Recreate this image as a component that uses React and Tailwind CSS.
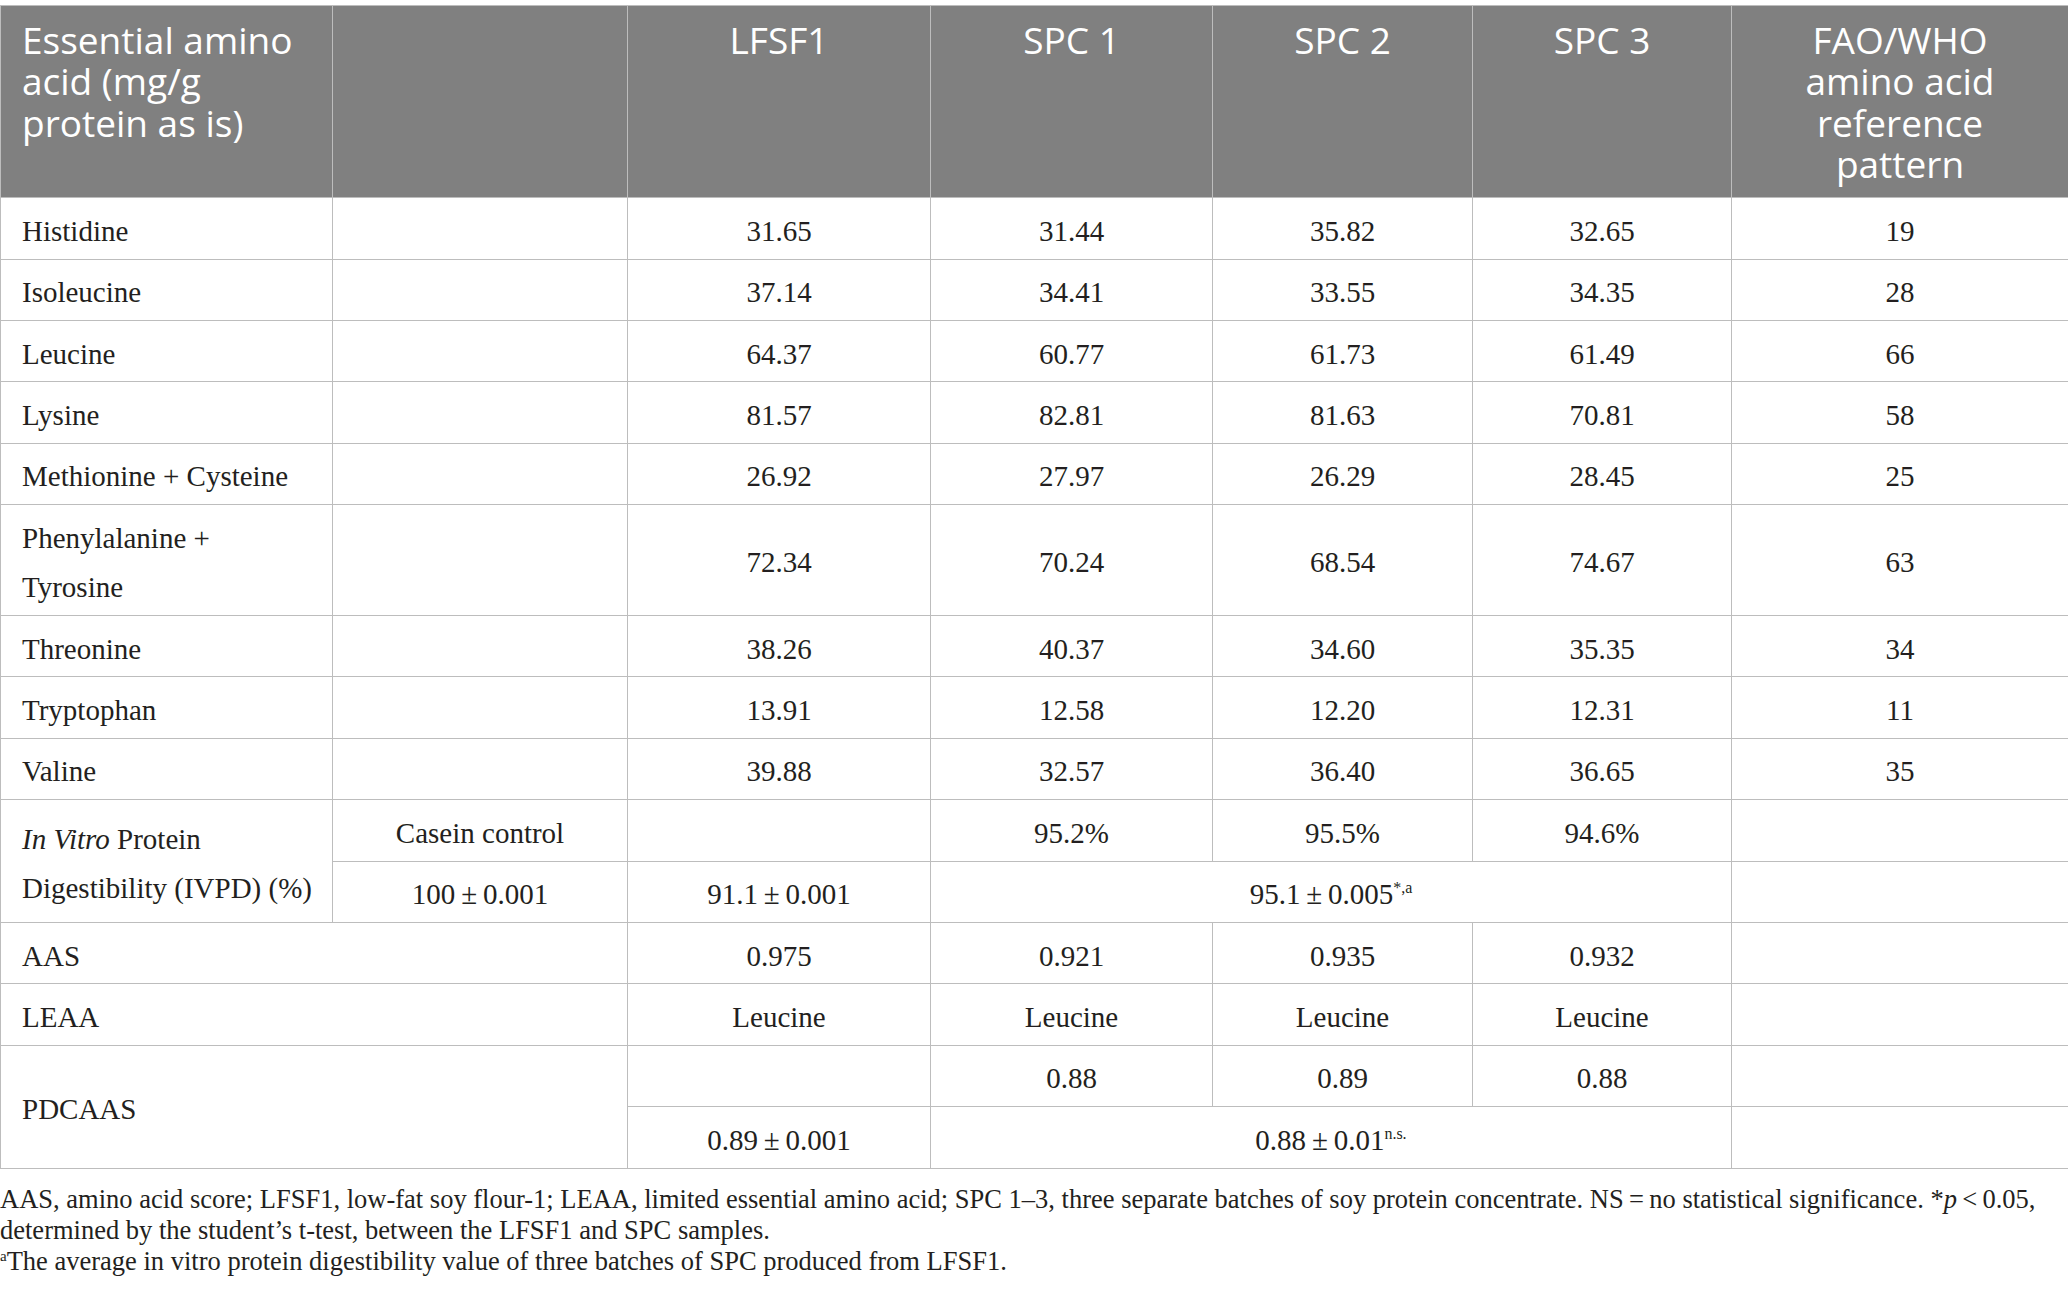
import React from "react";

const rows = [
  ["Histidine", "31.65", "31.44", "35.82", "32.65", "19"],
  ["Isoleucine", "37.14", "34.41", "33.55", "34.35", "28"],
  ["Leucine", "64.37", "60.77", "61.73", "61.49", "66"],
  ["Lysine", "81.57", "82.81", "81.63", "70.81", "58"],
  ["Methionine + Cysteine", "26.92", "27.97", "26.29", "28.45", "25"],
  [
    <>
      Phenylalanine +<br />
      Tyrosine
    </>,
    "72.34",
    "70.24",
    "68.54",
    "74.67",
    "63",
  ],
  ["Threonine", "38.26", "40.37", "34.60", "35.35", "34"],
  ["Tryptophan", "13.91", "12.58", "12.20", "12.31", "11"],
  ["Valine", "39.88", "32.57", "36.40", "36.65", "35"],
];

const C =
  "border border-[#bdbdbd] pt-[8.5px] pb-[2.5px] px-[12px] leading-[49.4px] align-middle text-center";
const L =
  "border border-[#bdbdbd] pt-[8.5px] pb-[2.5px] pl-[21px] pr-[8px] leading-[49.4px] align-middle text-left";
const H =
  "border border-[#bdbdbd] bg-[#808080] text-white align-top pt-[13px] pb-[13px] px-[10px] text-center font-['Open_Sans',sans-serif] text-[37px] leading-[41.3px] font-normal";

const pm = "\u2009±\u2009";

export default function App() {
  return (
    <div className="w-[2068px] min-h-[1296px] bg-white pt-[5px] text-[#231f20] font-['Liberation_Serif','Times_New_Roman',serif] text-[29px]">
      <table className="w-[2068px] table-fixed border-collapse">
        <colgroup>
          <col className="w-[332px]" />
          <col className="w-[295px]" />
          <col className="w-[303px]" />
          <col className="w-[282px]" />
          <col className="w-[260px]" />
          <col className="w-[259px]" />
          <col className="w-[337px]" />
        </colgroup>
        <thead>
          <tr>
            <th className={H + " !text-left !pl-[21px]"}>
              Essential amino
              <br />
              acid (mg/g
              <br />
              protein as is)
            </th>
            <th className={H}></th>
            <th className={H}>LFSF1</th>
            <th className={H}>SPC 1</th>
            <th className={H}>SPC 2</th>
            <th className={H}>SPC 3</th>
            <th className={H}>
              FAO/WHO
              <br />
              amino acid
              <br />
              reference
              <br />
              pattern
            </th>
          </tr>
        </thead>
        <tbody>
          {rows.map((r, i) => (
            <tr key={i}>
              <td className={L}>{r[0]}</td>
              <td className={C}></td>
              <td className={C}>{r[1]}</td>
              <td className={C}>{r[2]}</td>
              <td className={C}>{r[3]}</td>
              <td className={C}>{r[4]}</td>
              <td className={C}>{r[5]}</td>
            </tr>
          ))}
          <tr>
            <td className={L} rowSpan={2}>
              <i>In Vitro</i> Protein
              <br />
              Digestibility (IVPD) (%)
            </td>
            <td className={C}>Casein control</td>
            <td className={C}></td>
            <td className={C}>95.2%</td>
            <td className={C}>95.5%</td>
            <td className={C}>94.6%</td>
            <td className={C}></td>
          </tr>
          <tr>
            <td className={C}>100{pm}0.001</td>
            <td className={C}>91.1{pm}0.001</td>
            <td className={C} colSpan={3}>
              95.1{pm}0.005
              <sup className="text-[16px] leading-none -top-[11px]">*,a</sup>
            </td>
            <td className={C}></td>
          </tr>
          <tr>
            <td className={L} colSpan={2}>AAS</td>
            <td className={C}>0.975</td>
            <td className={C}>0.921</td>
            <td className={C}>0.935</td>
            <td className={C}>0.932</td>
            <td className={C}></td>
          </tr>
          <tr>
            <td className={L} colSpan={2}>LEAA</td>
            <td className={C}>Leucine</td>
            <td className={C}>Leucine</td>
            <td className={C}>Leucine</td>
            <td className={C}>Leucine</td>
            <td className={C}></td>
          </tr>
          <tr>
            <td className={L} colSpan={2} rowSpan={2}>
              PDCAAS
            </td>
            <td className={C}></td>
            <td className={C}>0.88</td>
            <td className={C}>0.89</td>
            <td className={C}>0.88</td>
            <td className={C}></td>
          </tr>
          <tr>
            <td className={C}>0.89{pm}0.001</td>
            <td className={C} colSpan={3}>
              0.88{pm}0.01
              <sup className="text-[16px] leading-none -top-[11px]">n.s.</sup>
            </td>
            <td className={C}></td>
          </tr>
        </tbody>
      </table>
      <div className="mt-[15px] text-[26.5px] leading-[31px]">
        <p>
          AAS, amino acid score; LFSF1, low-fat soy flour-1; LEAA, limited
          essential amino acid; SPC 1–3, three separate batches of soy protein
          concentrate. NS{"\u2009=\u2009"}no statistical significance.{" "}
          <span>
            *<i>p</i>
            {"\u2009<\u2009"}0.05,
          </span>{" "}
          determined by the student’s t-test, between the LFSF1 and SPC samples.
        </p>
        <p>
          <sup className="text-[15px] leading-none -top-[9px]">a</sup>
          The average in vitro protein digestibility value of three batches of
          SPC produced from LFSF1.
        </p>
      </div>
    </div>
  );
}
